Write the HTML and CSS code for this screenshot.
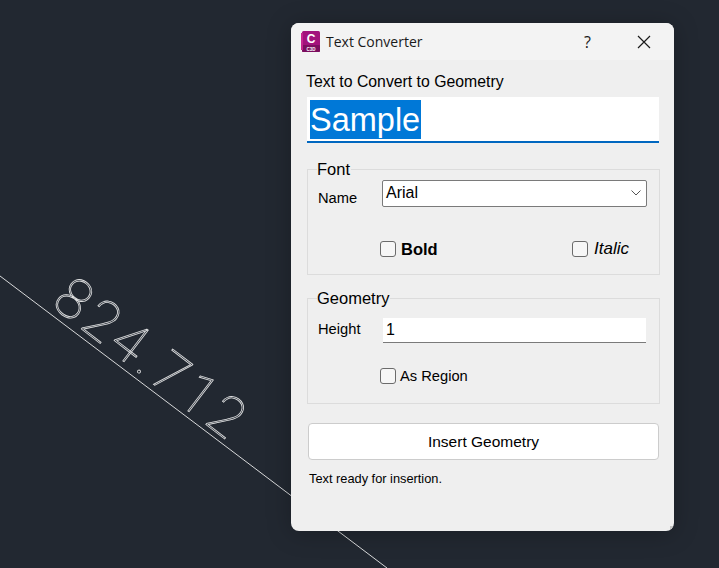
FILE: index.html
```html
<!DOCTYPE html>
<html lang="en">

<head>
    <meta charset="UTF-8" />
    <title>Text Converter</title>
    <link rel="stylesheet" href="styles.css">
</head>

<body>

    <svg class="drawing" width="719" height="568" viewBox="0 0 719 568">
        <line class="drawing-line" x1="0" y1="276" x2="387" y2="568" />
        <text class="drawing-text" transform="translate(50 305) rotate(37.5)">824.712</text>
    </svg>

    <div class="dialog">
        <div class="title-bar">
            <svg class="app-icon" width="19" height="21" viewBox="0 0 19 21">
                <rect x="1" y="0" width="18" height="21" rx="1.5" fill="#a3127c" />
                <rect x="1" y="14" width="18" height="7" rx="1" fill="#7c0f5f" />
                <rect x="0" y="2" width="2" height="17" fill="#c4268f" />
                <text class="app-icon-c" x="10" y="12">C</text>
                <text class="app-icon-sub" x="10" y="19.5">C3D</text>
            </svg>
            <span class="title">Text Converter</span>
            <span class="help">?</span>
            <svg class="close" width="14" height="14" viewBox="0 0 14 14">
                <path d="M1 1 L13 13 M13 1 L1 13" stroke="#1a1a1a" stroke-width="1.2" fill="none" />
            </svg>
        </div>

        <div class="content">
            <div class="text-label">Text to Convert to Geometry</div>
            <div class="text-input"><span class="selected">Sample</span></div>

            <fieldset class="group font-group">
                <legend>Font</legend>
                <div class="row">
                    <span class="row-label name-label">Name</span>
                    <div class="combo">
                        <span>Arial</span>
                        <svg width="10" height="6" viewBox="0 0 10 6">
                            <path d="M0.5 0.5 L5 5 L9.5 0.5" stroke="#555" fill="none" />
                        </svg>
                    </div>
                </div>
                <div class="checks">
                    <label class="check bold"><span class="box"></span>Bold</label>
                    <label class="check italic"><span class="box"></span>Italic</label>
                </div>
            </fieldset>

            <fieldset class="group geometry-group">
                <legend>Geometry</legend>
                <div class="row">
                    <span class="row-label height-label">Height</span>
                    <div class="height-input">1</div>
                </div>
                <div class="checks">
                    <label class="check region"><span class="box"></span>As Region</label>
                </div>
            </fieldset>

            <button class="insert">Insert Geometry</button>
            <div class="status">Text ready for insertion.</div>
        </div>
        <span class="grip"></span>
    </div>

</body>

</html>
```

FILE: styles.css
```css
html,
body {
    margin: 0;
    height: 100%;
}

body {
    width: 719px;
    height: 568px;
    overflow: hidden;
    position: relative;
    background-color: #222831;
    font-family: "Liberation Sans", Arial, sans-serif;
    color: #000;
}

.drawing {
    position: absolute;
    left: 0;
    top: 0;
}

.drawing-line {
    stroke: #d8d9da;
    stroke-width: 1;
}

.drawing-text {
    font-family: Roboto, sans-serif;
    font-size: 56px;
    font-weight: 100;
    letter-spacing: 4.5px;
    fill: none;
    stroke: #e0e1e2;
    stroke-width: 0.8;
}

.dialog {
    position: absolute;
    left: 291px;
    top: 23px;
    width: 383px;
    height: 508px;
    background-color: #efefef;
    border-radius: 8px;
    box-shadow: 0 2px 24px rgba(0, 0, 0, 0.25);
    overflow: hidden;
}

.title-bar {
    height: 37px;
    background-color: #f3f3f3;
    display: flex;
    align-items: center;
    padding-left: 10px;
}

.app-icon {
    margin-right: 6px;
}

.app-icon-c {
    font-family: "Liberation Sans", sans-serif;
    font-size: 12px;
    font-weight: bold;
    fill: #fff;
    text-anchor: middle;
}

.app-icon-sub {
    font-family: "Liberation Sans", sans-serif;
    font-size: 4.5px;
    font-weight: bold;
    fill: #fff;
    text-anchor: middle;
}

.title {
    font-family: "Open Sans", sans-serif;
    font-size: 14px;
    color: #1a1a1a;
    width: 258px;
}

.help {
    font-family: "Open Sans", sans-serif;
    font-size: 16px;
    color: #1a1a1a;
    width: 53px;
}

.content {
    padding: 13px 14px 0 15px;
}

.text-label {
    font-size: 15.8px;
    line-height: 18px;
}

.text-input {
    height: 41px;
    margin: 6px 0 0 1px;
    background-color: #fff;
    border-bottom: 2px solid #0067c0;
    padding: 3px 0 0 3px;
    font-size: 32.5px;
    line-height: 37px;
    width: 349px;
}

.selected {
    display: inline-block;
    background-color: #0078d7;
    color: #fff;
    padding: 2px 1px 0 0;
}

.group {
    margin: 0 0 0 1px;
    padding: 0;
    width: 351px;
    border: 1px solid #dcdcdc;
}

.group legend {
    margin-left: 9px;
    padding: 0 1px 0 0;
    font-size: 16.5px;
    line-height: 18px;
}

.font-group {
    height: 113px;
    margin-top: 17px;
}

.geometry-group {
    height: 113px;
    margin-top: 14px;
}

.row {
    display: flex;
    align-items: flex-start;
    padding-left: 10px;
}

.geometry-group .row {
    padding-top: 11px;
}

.row-label {
    width: 64px;
    font-size: 14.7px;
    line-height: 18px;
}

.name-label {
    padding-top: 11px;
}

.height-label {
    padding-top: 2px;
}

.combo {
    width: 255px;
    height: 24px;
    background-color: #fff;
    border: 1px solid #7a7a7a;
    border-radius: 2px;
    display: flex;
    align-items: center;
    justify-content: space-between;
    padding: 0 5px 1px 3px;
    margin-top: 2px;
    font-size: 16px;
}

.height-input {
    width: 260px;
    height: 24px;
    background-color: #fff;
    border-bottom: 1px solid #7a7a7a;
    padding-left: 3px;
    margin-left: 1px;
    font-size: 16px;
    line-height: 23px;
}

.checks {
    display: flex;
    padding-left: 72px;
}

.font-group .checks {
    margin-top: 33px;
}

.geometry-group .checks {
    margin-top: 24px;
}

.check {
    display: flex;
    align-items: center;
    height: 18px;
}

.box {
    width: 14px;
    height: 14px;
    border: 1px solid #6b6b6b;
    border-radius: 3px;
    background-color: #f6f6f6;
    margin-right: 5px;
}

.bold {
    font-size: 16.5px;
    font-weight: bold;
    width: 192px;
}

.italic {
    font-size: 17px;
    font-style: italic;
}

.italic .box {
    margin-right: 6px;
}

.region {
    font-size: 14.7px;
}

.region .box {
    margin-right: 4px;
}

.insert {
    display: block;
    width: 351px;
    height: 37px;
    margin: 19px 0 0 2px;
    background-color: #fff;
    border: 1px solid #cccccc;
    border-radius: 4px;
    font-family: "Liberation Sans", Arial, sans-serif;
    font-size: 15.5px;
    color: #000;
}

.status {
    margin: 12px 0 0 3px;
    font-size: 12.8px;
    line-height: 14px;
}

.grip {
    position: absolute;
    right: 1px;
    bottom: 2px;
    width: 3px;
    height: 3px;
    background-color: #c4c4c4;
}
```
